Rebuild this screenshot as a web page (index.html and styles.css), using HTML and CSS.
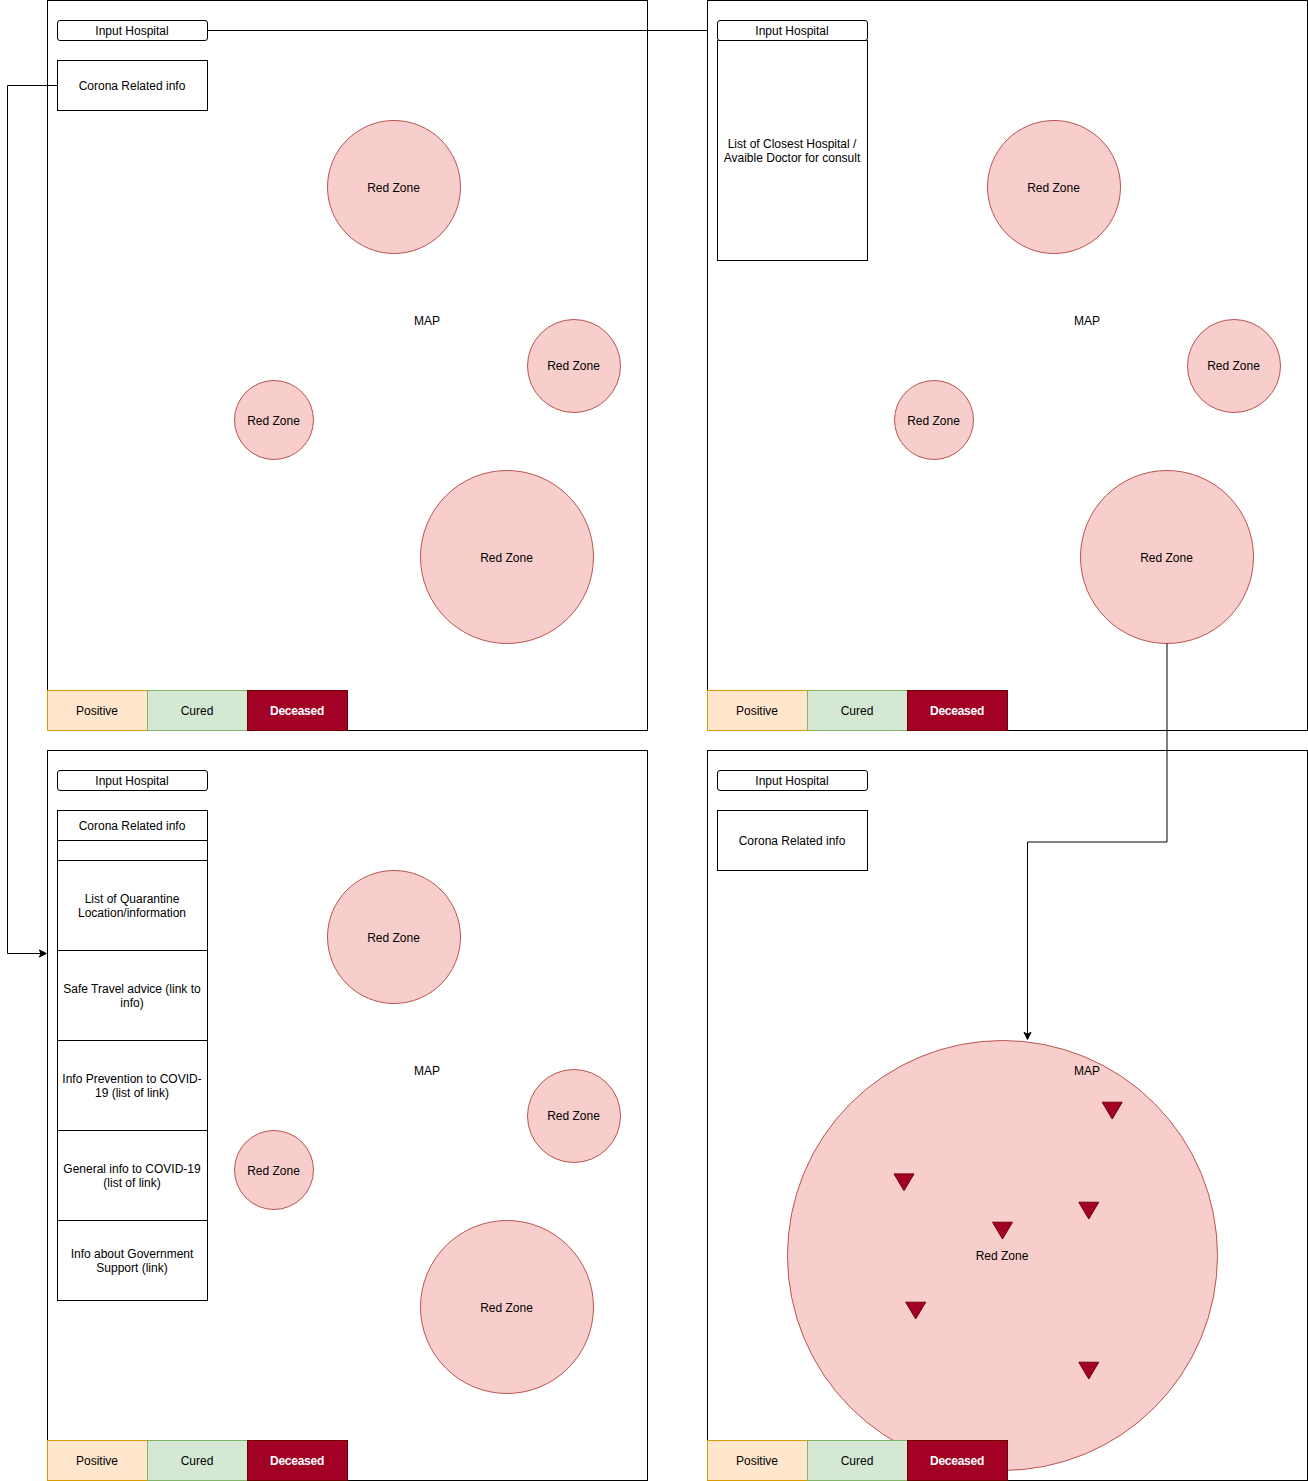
FILE: index.html
```html
<!DOCTYPE html>
<html lang="en">
<head>
<meta charset="utf-8">
<title>Corona map wireframes</title>
<link rel="stylesheet" href="styles.css">
</head>
<body>
<main class="board">
  <section class="panel">
    <div class="input">Input Hospital</div>
    <div class="box">Corona Related info</div>
    <div class="map-label">MAP</div>
    <div class="zone zone-north">Red Zone</div>
    <div class="zone zone-east">Red Zone</div>
    <div class="zone zone-west">Red Zone</div>
    <div class="zone zone-south">Red Zone</div>
    <div class="legend"><div class="key positive">Positive</div><div class="key cured">Cured</div><div class="key deceased">Deceased</div></div>
  </section>

  <section class="panel">
    <div class="input">Input Hospital</div>
    <div class="box results">List of Closest Hospital / Avaible Doctor for consult</div>
    <div class="map-label">MAP</div>
    <div class="zone zone-north">Red Zone</div>
    <div class="zone zone-east">Red Zone</div>
    <div class="zone zone-west">Red Zone</div>
    <div class="zone zone-south">Red Zone</div>
    <div class="legend"><div class="key positive">Positive</div><div class="key cured">Cured</div><div class="key deceased">Deceased</div></div>
  </section>

  <section class="panel">
    <div class="input">Input Hospital</div>
    <div class="menu">
      <div class="row title">Corona Related info</div>
      <div class="row blank"></div>
      <div class="row">List of Quarantine Location/information</div>
      <div class="row">Safe Travel advice (link to info)</div>
      <div class="row">Info Prevention to COVID-19 (list of link)</div>
      <div class="row">General info to COVID-19 (list of link)</div>
      <div class="row last">Info about Government Support (link)</div>
    </div>
    <div class="map-label">MAP</div>
    <div class="zone zone-north">Red Zone</div>
    <div class="zone zone-east">Red Zone</div>
    <div class="zone zone-west">Red Zone</div>
    <div class="zone zone-south">Red Zone</div>
    <div class="legend"><div class="key positive">Positive</div><div class="key cured">Cured</div><div class="key deceased">Deceased</div></div>
  </section>

  <section class="panel">
    <div class="input">Input Hospital</div>
    <div class="box tall">Corona Related info</div>
    <div class="zone zone-detail">Red Zone</div>
    <div class="map-label">MAP</div>
    <svg class="pins" width="599" height="729" viewBox="708 751 599 729">
      <defs><path id="pin" d="M-10 0H10L0 16.8Z"/></defs>
      <use href="#pin" x="1112.2" y="1102.2"/>
      <use href="#pin" x="904" y="1173.9"/>
      <use href="#pin" x="1088.8" y="1202.2"/>
      <use href="#pin" x="1002.5" y="1222.2"/>
      <use href="#pin" x="915.7" y="1302.2"/>
      <use href="#pin" x="1088.8" y="1362.2"/>
    </svg>
    <div class="legend"><div class="key positive">Positive</div><div class="key cured">Cured</div><div class="key deceased">Deceased</div></div>
  </section>

  <svg class="connectors" width="1308" height="1481" viewBox="0 0 1308 1481">
    <path class="line" d="M207 30.5H708"/>
    <path class="line" d="M57 85.5H7.500V953.5H41"/>
    <path class="head" d="M46.380 953.5l-7 3.5 1.750-3.5-1.750-3.5z"/>
    <path class="line" d="M1167 643.500V842H1027.500V1034"/>
    <path class="head" d="M1027.500 1039.400l-3.500-7 3.500 1.750 3.500-1.750z"/>
  </svg>
</main>
</body>
</html>
```
FILE: styles.css
```css
* { box-sizing: border-box; }

body {
  margin: 0;
  background: #fff;
  color: #000;
  font: 12px/14px "Liberation Sans", Arial, Helvetica, sans-serif;
  text-align: center;
}

.board {
  position: relative;
  display: grid;
  grid-template-columns: 601px 601px;
  grid-template-rows: 731px 731px;
  gap: 19px 59px;
  width: 1308px;
  padding-left: 47px;
}

.panel {
  position: relative;
  display: flex;
  flex-direction: column;
  align-items: flex-start;
  padding: 19px 9px 0;
  border: 1px solid #000;
}

.input,
.box,
.menu {
  width: 151px;
  border: 1px solid #000;
  background: #fff;
}

.input {
  position: relative;
  z-index: 1;
  height: 21px;
  padding: 3px 1px 0 0;
  border-radius: 3px;
}

.box,
.row,
.key,
.zone {
  display: flex;
  align-items: center;
  justify-content: center;
  padding-right: 1px;
}

.box {
  height: 51px;
  margin-top: 19px;
}

.box.tall { height: 61px; }

.box.results {
  height: 221px;
  margin-top: -1px;
}

.menu { margin-top: 19px; }

.row {
  height: 90px;
  border-bottom: 1px solid #000;
}

.row.title { height: 30px; }
.row.blank { height: 20px; }

.row.last {
  height: 79px;
  border-bottom: 0;
}

.legend {
  position: relative;
  display: flex;
  margin: auto 0 -1px -10px;
}

.key {
  width: 101px;
  height: 41px;
  border: 1px solid;
}

.key + .key { margin-left: -1px; }
.positive { background: #ffe6cc; border-color: #d79b00; }
.cured { background: #d5e8d4; border-color: #82b366; }

.deceased {
  background: #a20025;
  border-color: #6f0000;
  color: #fff;
  font-weight: bold;
  letter-spacing: -0.25px;
}

.map-label {
  position: absolute;
  top: 313px;
  left: 359px;
  width: 40px;
}

.zone {
  position: absolute;
  padding-top: 2px;
  border: 1px solid #b85450;
  border-radius: 50%;
  background: #f8cecc;
}

.zone-north { left: 279px; top: 119px; width: 134px; height: 134px; }
.zone-east { left: 479px; top: 318px; width: 94px; height: 94px; padding-top: 0; }
.zone-west { left: 186px; top: 379px; width: 80px; height: 80px; }
.zone-south { left: 372px; top: 469px; width: 174px; height: 174px; }
.zone-detail { left: 79px; top: 289px; width: 431px; height: 431px; padding-top: 0; }

.pins {
  position: absolute;
  inset: 0;
  fill: #a20025;
  stroke: #6f0000;
}

.connectors {
  position: absolute;
  inset: 0;
  z-index: 2;
  pointer-events: none;
}

.line { fill: none; stroke: #000; }
.head { fill: #000; stroke: #000; }
```
